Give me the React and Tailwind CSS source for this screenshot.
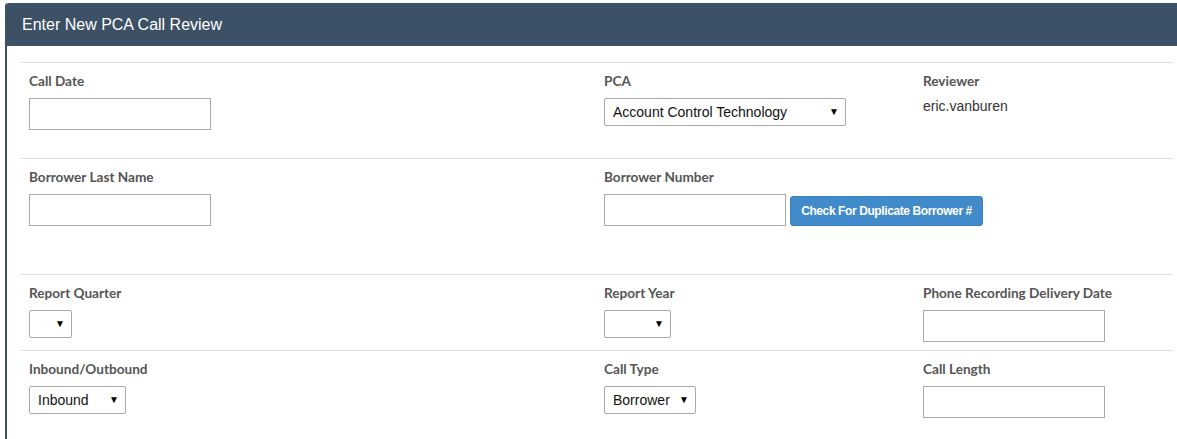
const labelCls = "block font-['Lato','Open_Sans',sans-serif] font-bold text-[13.6px] leading-[18px] text-[#555]";
const inputCls = "block shrink-0 w-[182px] h-[32px] border border-[#a9a9a9] bg-white";

function Field({ label, children }) {
    return (
        <div className="px-2">
            <span className={labelCls}>{label}</span>
            <div className="mt-2">{children}</div>
        </div>
    );
}

function FakeSelect({ value = "", width }) {
    return (
        <div
            className={`flex items-center justify-between h-[28px] border border-[#a9a9a9] rounded-[2px] bg-white pl-[8px] pr-[6px] ${width}`}
        >
            <span className="text-[14px] text-[#111] font-['Liberation_Sans',Arial,sans-serif]">{value}</span>
            <span className="text-[10px] text-black leading-none">▼</span>
        </div>
    );
}

function Row({ height, children }) {
    return (
        <div className={`border-t border-[#dcdcdc] pt-[9px] grid grid-cols-[575px_319px_1fr] ${height}`}>
            {children}
        </div>
    );
}

export default function App() {
    return (
        <div className="w-[1177px] h-[439px] overflow-hidden bg-white pt-[3px] pl-[5px] font-['Liberation_Sans',Arial,sans-serif]">
            <div className="w-[1182px] h-[460px] border-l-2 border-[#3c5066] rounded-tl-[3px]">
                <div className="h-[43px] bg-[#3c5066] flex items-center pl-[15px] rounded-tl-[2px]">
                    <h1 className="text-white text-[16px]">Enter New PCA Call Review</h1>
                </div>
                <div className="px-[14px] pt-[16px]">
                    <Row height="h-[96px]">
                        <Field label="Call Date">
                            <div className={inputCls} />
                        </Field>
                        <Field label="PCA">
                            <FakeSelect value="Account Control Technology" width="w-[242px]" />
                        </Field>
                        <div className="px-2">
                            <span className={labelCls}>Reviewer</span>
                            <p className="mt-[6px] text-[14px] text-[#333]">eric.vanburen</p>
                        </div>
                    </Row>
                    <Row height="h-[116px]">
                        <Field label="Borrower Last Name">
                            <div className={inputCls} />
                        </Field>
                        <Field label="Borrower Number">
                            <div className="flex items-start gap-[4px] w-[400px]">
                                <div className={inputCls} />
                                <button className="shrink-0 whitespace-nowrap mt-[2px] h-[30px] w-[193px] rounded-[3px] bg-[#428bca] border border-[#3b7fc0] text-white text-[12px] font-bold tracking-[-0.4px]">
                                    Check For Duplicate Borrower #
                                </button>
                            </div>
                        </Field>
                        <div />
                    </Row>
                    <Row height="h-[76px]">
                        <Field label="Report Quarter">
                            <FakeSelect width="w-[43px]" />
                        </Field>
                        <Field label="Report Year">
                            <FakeSelect width="w-[67px]" />
                        </Field>
                        <Field label="Phone Recording Delivery Date">
                            <div className={inputCls} />
                        </Field>
                    </Row>
                    <Row height="h-[90px]">
                        <Field label="Inbound/Outbound">
                            <FakeSelect value="Inbound" width="w-[97px]" />
                        </Field>
                        <Field label="Call Type">
                            <FakeSelect value="Borrower" width="w-[92px]" />
                        </Field>
                        <Field label="Call Length">
                            <div className={inputCls} />
                        </Field>
                    </Row>
                </div>
            </div>
        </div>
    );
}
